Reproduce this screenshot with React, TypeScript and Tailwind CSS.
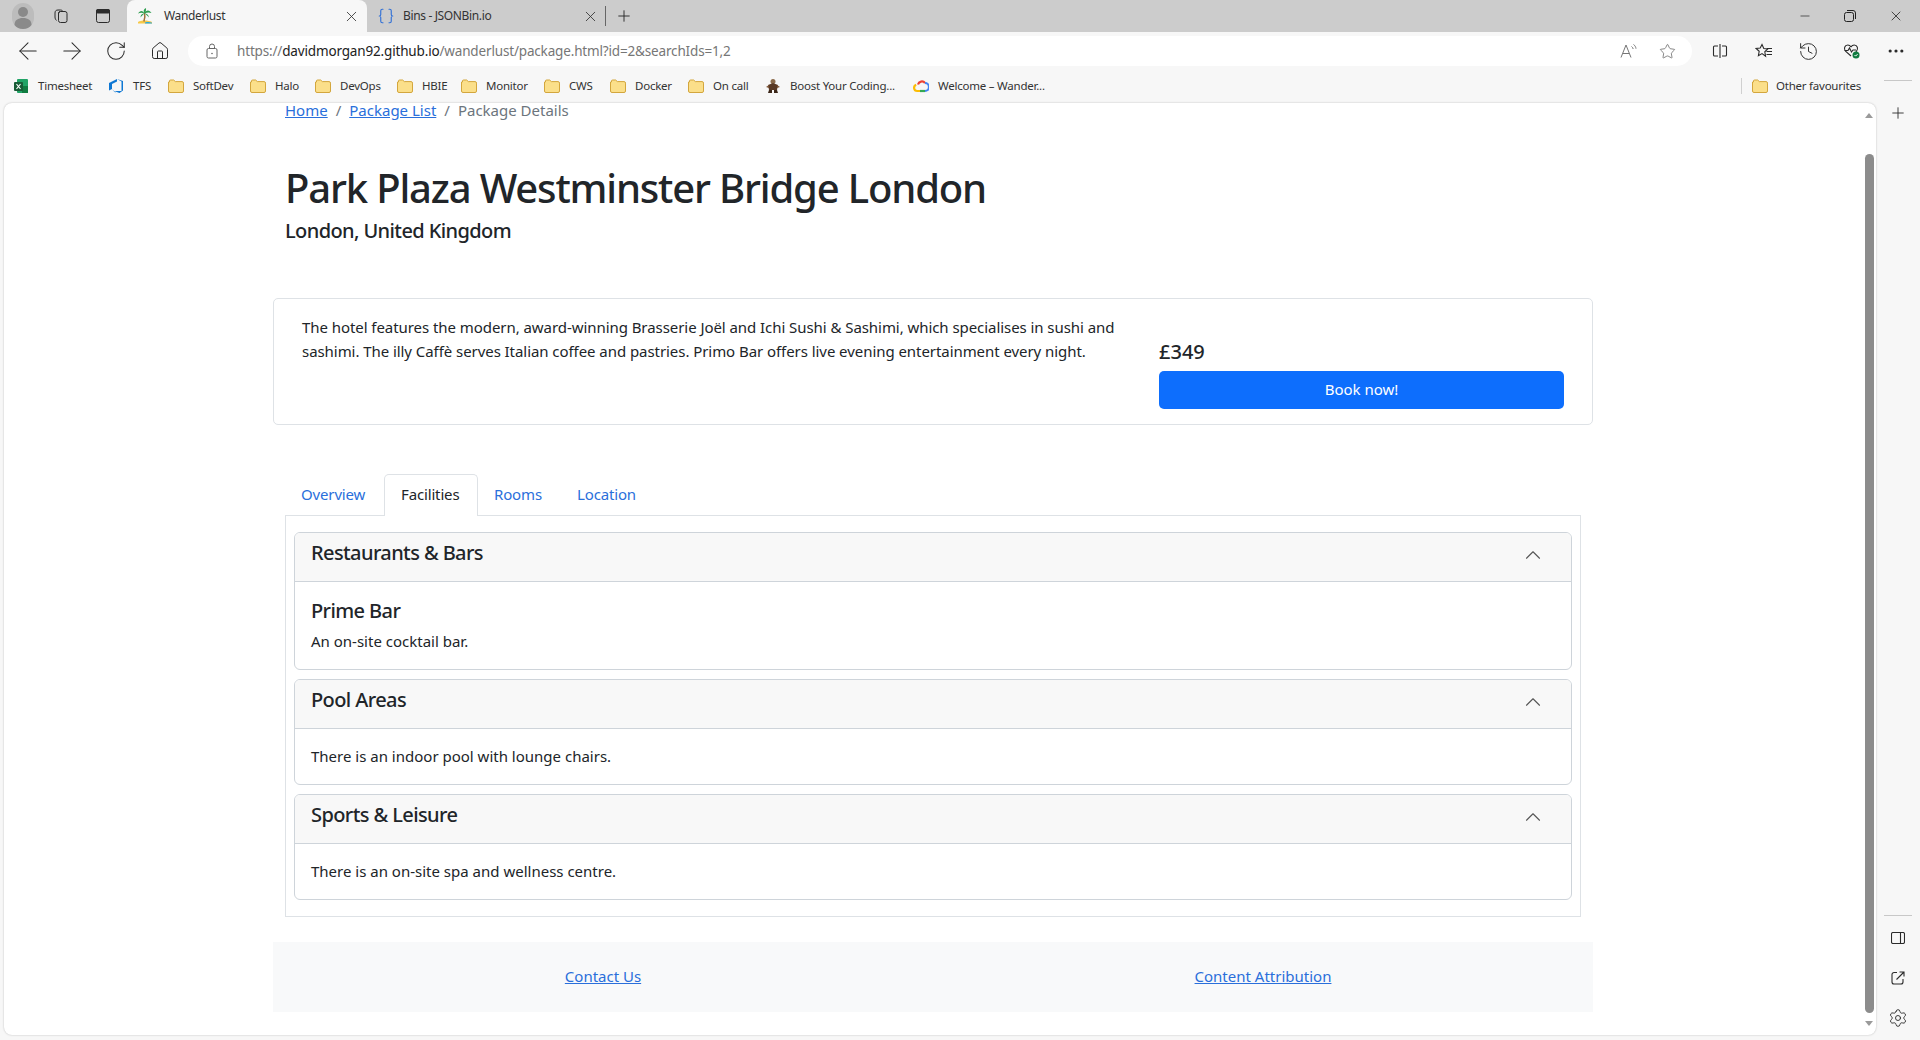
import { ArrowLeft, ArrowRight, Braces, ChevronUp, History, House, Minus, MoreHorizontal, Plus, RotateCw, Settings, Star, X } from 'lucide-react';

function Folder() {
  return (
    <svg width="16" height="14" viewBox="0 0 16 14" className="shrink-0">
      <path d="M1.5 3V2a1 1 0 0 1 1-1h3.2l1.6 1.6H14a1.5 1.5 0 0 1 1.5 1.5v7.9a1.5 1.5 0 0 1-1.5 1.5H2a1.5 1.5 0 0 1-1.5-1.5V3z" fill="#fbdf8a" stroke="#d3a63d" />
    </svg>
  );
}

function ExcelIcon() {
  return (
    <svg width="16" height="16" viewBox="0 0 16 16" className="shrink-0">
      <rect x="4" y="1" width="11" height="14" rx="1" fill="#21a366" />
      <rect x="9" y="8" width="6" height="7" fill="#107c41" />
      <rect x="1" y="4" width="9" height="9" rx="1" fill="#185c37" />
      <path d="M3.5 6l4 5M7.5 6l-4 5" stroke="#fff" strokeWidth="1.2" />
    </svg>
  );
}

function TfsIcon() {
  return (
    <svg width="16" height="16" viewBox="0 0 16 16" className="shrink-0">
      <path d="M15 3v9.5L11.5 15 6 13h7.5V3.4L9 1z" fill="#0f78d4" />
      <path d="M1 5l8-4v2.5L4 6v5l-3 1.5z" fill="#0f78d4" />
      <path d="M4 11l4.5 4.5L6 13.5z" fill="#0f78d4" />
    </svg>
  );
}

function DwarfIcon() {
  return (
    <svg width="16" height="16" viewBox="0 0 16 16" className="shrink-0">
      <circle cx="8" cy="3.5" r="2.5" fill="#8a6a4a" />
      <path d="M3 7l5-2 5 2-1 5H4z" fill="#5a3a25" />
      <path d="M4 12h3v3H3zM9 12h3l1 3H9z" fill="#3b2618" />
      <path d="M1 9l3-2v3zM15 9l-3-2v3z" fill="#7b5335" />
    </svg>
  );
}

function CloudIcon() {
  return (
    <svg width="16" height="14" viewBox="0 0 16 14" className="shrink-0">
      <path d="M5 5.5A4 4 0 0 1 12 4" fill="none" stroke="#ea4335" strokeWidth="2.2" />
      <path d="M12 4a3.9 3.9 0 0 1 0 8" fill="none" stroke="#4285f4" strokeWidth="2.2" />
      <path d="M12 12H7" fill="none" stroke="#34a853" strokeWidth="2.2" />
      <path d="M7 12H4.2a3.2 3.2 0 0 1-1-6.2" fill="none" stroke="#fbbc05" strokeWidth="2.2" />
    </svg>
  );
}

function PalmIcon() {
  return (
    <svg width="16" height="16" viewBox="0 0 16 16" className="shrink-0">
      <path d="M1 14c3-2 10-2 14 0v1.500H1z" fill="#f7c948" />
      <path d="M8 14.500c3-.8 5-.6 7 .2v.8H8z" fill="#29a9e0" />
      <path d="M7.500 5c.7 3 .5 5.500-.6 8.500" fill="none" stroke="#a0703a" strokeWidth="1.500" />
      <path d="M7.500 5.500C6 2 3 2 1 5.500 3.500 4.500 5.500 4.700 7.500 5.500zM7.500 5.500C9 1.500 12.500 1.500 14.500 5c-2.500-1-4.500-.7-7 .5zM7.500 5.500C6 3 6.500 1 9 0c.3 2.300-.3 4-1.500 5.500zM7.500 5.500C5 5.500 3.500 7 3.500 9.500c1.500-2 2.500-3 4-4zM7.500 5.500c2.500 0 4 1.500 4.500 4-1.500-2-3-3-4.500-4z" fill="#2e9e4f" />
    </svg>
  );
}

function CollectionsIcon() {
  return (
    <svg width="16" height="16" viewBox="0 0 16 16" fill="none" stroke="#2b2b2b" strokeWidth="1">
      <rect x="5.500" y="3.500" width="8.500" height="11" rx="2" />
      <path d="M3.500 12.500c-1-1-1.500-2-1.500-3.500V5c0-2 1-3 3-3h2.500c1 0 2 .5 2.500 1.500" />
      <path d="M5.500 6c0-1.500.8-2.500 2-2.500" />
    </svg>
  );
}

function TabActionsIcon() {
  return (
    <svg width="16" height="16" viewBox="0 0 16 16" fill="none" stroke="#2b2b2b" strokeWidth="1">
      <rect x="1.500" y="1.500" width="13" height="13" rx="2" />
      <rect x="1.500" y="1.500" width="13" height="3.500" rx="1" fill="#2b2b2b" />
    </svg>
  );
}

function ProfileIcon() {
  return (
    <svg width="22" height="26" viewBox="0 0 22 26">
      <rect width="22" height="26" rx="11" fill="#bcbcbc" />
      <circle cx="11" cy="9" r="5" fill="#8a8a8a" />
      <path d="M2.500 22c0-5 3.500-7 8.500-7s8.500 2 8.500 7c-2 2.500-5 4-8.500 4s-6.500-1.500-8.500-4z" fill="#8a8a8a" />
    </svg>
  );
}

function LockIcon() {
  return (
    <svg width="14" height="16" viewBox="0 0 14 16" fill="none" stroke="#666" strokeWidth="1">
      <rect x="2" y="5.500" width="10" height="9.500" rx="1.500" />
      <path d="M4.500 5.500V3.500a2.500 2.500 0 0 1 5 0v2" />
      <circle cx="7" cy="10.500" r="0.800" fill="#666" stroke="none" />
    </svg>
  );
}

function ReadAloudIcon() {
  return (
    <svg width="18" height="16" viewBox="0 0 18 16" fill="none" stroke="#767676" strokeWidth="1">
      <path d="M1 14.500L6 2l5 12.500M3 10.500h6" />
      <path d="M11.500 3.500c1 .7 1.500 1.500 1.700 2.500M13.500 1.500c1.500 1 2.300 2.500 2.500 4.200" />
    </svg>
  );
}

function SplitIcon() {
  return (
    <svg width="16" height="16" viewBox="0 0 16 16" fill="none" stroke="#2b2b2b" strokeWidth="1.100">
      <path d="M6 3H2.500A1 1 0 0 0 1.500 4v8a1 1 0 0 0 1 1H6M10 3h3.500a1 1 0 0 1 1 1v8a1 1 0 0 1-1 1H10M8 1v14" />
    </svg>
  );
}

function FavoritesIcon() {
  return (
    <svg width="18" height="16" viewBox="0 0 18 16" fill="none" stroke="#2b2b2b" strokeWidth="1.100">
      <path d="M7 1.500l1.800 4 4 .5-3 2.800.8 4.400L7 10.600 3.400 12.700l.8-4.400-3-2.800 4-.5z" />
      <path d="M12 5.500h5M11.500 8.500h5.500M11.500 11.500h5.500" />
    </svg>
  );
}

function HealthIcon() {
  return (
    <svg width="18" height="18" viewBox="0 0 18 18" fill="none">
      <path d="M8 14L2.500 9.200C.5 7 1.500 3 4.800 3c1.500 0 2.500.8 3.200 1.800C8.700 3.800 9.700 3 11.200 3c3.300 0 4.300 4 2.300 6.200L13 10" stroke="#2b2b2b" strokeWidth="1.100" />
      <path d="M1.500 8.500h3.500l1.500-2.500 2 4 1.500-2h3" stroke="#2b2b2b" strokeWidth="1.100" />
      <circle cx="13" cy="13" r="3.500" fill="#107c41" />
      <path d="M11.500 13l1.100 1.100 2-2" stroke="#fff" strokeWidth="1" />
    </svg>
  );
}

function PanelIcon() {
  return (
    <svg width="14" height="12" viewBox="0 0 14 12" fill="none" stroke="#2b2b2b" strokeWidth="1.100">
      <rect x="0.500" y="0.500" width="13" height="11" rx="1.500" />
      <path d="M9.500 0.500v11" />
    </svg>
  );
}

function ShareIcon() {
  return (
    <svg width="14" height="14" viewBox="0 0 14 14" fill="none" stroke="#2b2b2b" strokeWidth="1.100">
      <path d="M6 1.500H3A2 2 0 0 0 1 3.500v7.500a2 2 0 0 0 2 2h7a2 2 0 0 0 2-2V8" />
      <path d="M5.500 8.500L13 1M8.500 1H13v4.500" />
    </svg>
  );
}

const bookmarks = [
  { icon: <ExcelIcon />, label: 'Timesheet', width: 'w-[95px]' },
  { icon: <TfsIcon />, label: 'TFS', width: 'w-[60px]' },
  { icon: <Folder />, label: 'SoftDev', width: 'w-[82px]' },
  { icon: <Folder />, label: 'Halo', width: 'w-[65px]' },
  { icon: <Folder />, label: 'DevOps', width: 'w-[82px]' },
  { icon: <Folder />, label: 'HBIE', width: 'w-[64px]' },
  { icon: <Folder />, label: 'Monitor', width: 'w-[83px]' },
  { icon: <Folder />, label: 'CWS', width: 'w-[66px]' },
  { icon: <Folder />, label: 'Docker', width: 'w-[78px]' },
  { icon: <Folder />, label: 'On call', width: 'w-[77px]' },
  { icon: <DwarfIcon />, label: 'Boost Your Coding...', width: 'w-[148px]' },
  { icon: <CloudIcon />, label: 'Welcome – Wander...', width: 'w-[140px]' },
];

const facilities = [
  { title: 'Pool Areas', text: 'There is an indoor pool with lounge chairs.' },
  { title: 'Sports & Leisure', text: 'There is an on-site spa and wellness centre.' },
];

function AccordionHeader({ title }: { title: string }) {
  return (
    <div className="h-[49px] bg-[#f8f8f8] border-b border-[#ced4da] rounded-t-[5px] pl-4 pr-[25px] pt-2 flex justify-between">
      <span className="text-[20px] leading-6 font-medium tracking-[-0.03em]">{title}</span>
      <ChevronUp className="w-[26px] h-[26px] mt-[1px] text-[#555]" strokeWidth={1} />
    </div>
  );
}

export default function App() {
  return (
    <div className="w-[1920px] h-[1040px] overflow-hidden flex flex-col bg-[#f7f7f7] text-[#212529] font-['Noto_Sans',sans-serif]">
      {/* tab strip */}
      <div className="h-8 shrink-0 bg-[#cccccc] flex items-end text-[12px]">
        <div className="w-[127px] h-8 flex items-center shrink-0">
          <div className="ml-3"><ProfileIcon /></div>
          <div className="ml-[19px]"><CollectionsIcon /></div>
          <div className="ml-[26px]"><TabActionsIcon /></div>
        </div>
        <div className="w-[240px] h-8 bg-[#f7f7f7] rounded-t-lg flex items-center pl-[10px] pr-[7px]">
          <PalmIcon />
          <span className="ml-[11px] flex-1 tracking-[-0.03em] text-[#333]">Wanderlust</span>
          <X className="w-[17px] h-[17px] text-[#333]" strokeWidth={1.2} />
        </div>
        <div className="w-[238px] h-8 flex items-center pl-[10px] pr-[6px]">
          <Braces className="w-[18px] h-[18px] mr-2 shrink-0 text-[#2f6fd6]" strokeWidth={1.5} />
          <span className="flex-1 tracking-[-0.03em] text-[#333]">Bins - JSONBin.io</span>
          <X className="w-[17px] h-[17px] text-[#333]" strokeWidth={1.2} />
        </div>
        <div className="w-px h-5 mb-[6px] bg-[#666]" />
        <Plus className="w-[18px] h-[18px] mb-[7px] ml-[9px] text-[#222]" strokeWidth={1.2} />
        <div className="flex-1" />
        <div className="flex items-center h-8 pr-4 gap-[32px]">
          <Minus className="w-[14px] h-[14px] text-[#222]" strokeWidth={1.2} />
          <svg width="12" height="12" viewBox="0 0 12 12" fill="none" stroke="#222"><rect x="0.500" y="2.500" width="9" height="9" rx="2" /><path d="M3 .5h6a2.500 2.500 0 0 1 2.500 2.500v6" /></svg>
          <X className="w-4 h-4 text-[#222]" strokeWidth={1.2} />
        </div>
      </div>

      {/* toolbar */}
      <div className="h-9 shrink-0 flex items-center pt-[2px]">
        <div className="w-[188px] flex items-center pl-[6px] text-[#2b2b2b]">
          <div className="w-11 flex justify-center"><ArrowLeft className="w-[28px] h-[28px]" strokeWidth={0.9} /></div>
          <div className="w-11 flex justify-center"><ArrowRight className="w-[28px] h-[28px]" strokeWidth={0.9} /></div>
          <div className="w-11 flex justify-center"><RotateCw className="w-[22px] h-[22px]" strokeWidth={1.1} /></div>
          <div className="w-11 flex justify-center"><House className="w-5 h-5" strokeWidth={1.2} /></div>
        </div>
        <div className="w-[1504px] h-[30px] bg-white rounded-full flex items-center pl-[17px] pr-[16px]">
          <LockIcon />
          <span className="ml-[18px] text-[13.500px] tracking-[-0.012em] text-[#767676] flex-1">
            https://<span className="text-[#222]">davidmorgan92.github.io</span>/wanderlust/package.html?id=2&amp;searchIds=1,2
          </span>
          <ReadAloudIcon />
          <Star className="w-[17px] h-[17px] ml-[21px] text-[#666]" strokeWidth={1.1} />
        </div>
        <div className="flex items-center pl-[6px] text-[#2b2b2b]">
          <div className="w-11 flex justify-center"><SplitIcon /></div>
          <div className="w-11 flex justify-center"><FavoritesIcon /></div>
          <div className="w-11 flex justify-center"><History className="w-[21px] h-[21px]" strokeWidth={1.1} /></div>
          <div className="w-11 flex justify-center"><HealthIcon /></div>
          <div className="w-11 flex justify-center"><MoreHorizontal className="w-5 h-5" strokeWidth={1.800} /></div>
        </div>
      </div>

      {/* bookmarks */}
      <div className="h-[35px] shrink-0 flex items-center text-[11.500px] text-[#333] tracking-[-0.02em] pl-[13px]">
        {bookmarks.map((b) => (
          <div key={b.label} className={`${b.width} flex items-center gap-[9px] whitespace-nowrap`}>
            {b.icon}
            <span>{b.label}</span>
          </div>
        ))}
        <div className="flex-1" />
        <div className="w-px h-[16px] bg-[#d0d0d0]" />
        <div className="ml-[10px] flex items-center gap-2 w-[168px]">
          <Folder />
          <span>Other favourites</span>
        </div>
      </div>

      <div className="flex-1 flex min-h-0">
        {/* page */}
        <div className="ml-1 w-[1872px] mb-[5px] bg-white rounded-lg shadow-[0_0_2px_rgba(0,0,0,0.25)] flex">
          <div className="flex-1 min-w-0 text-[15px] leading-6">
            <div className="w-[1320px] mx-auto">
              <div className="pl-3 h-4 leading-[14px] text-[#6c757d] flex">
                <a className="text-[#2a6fdb] underline">Home</a>
                <span className="px-2">/</span>
                <a className="text-[#2a6fdb] underline">Package List</a>
                <span className="px-2">/</span>
                <span>Package Details</span>
              </div>

              <h1 className="mt-[45px] pl-3 text-[40px] leading-[48px] font-medium tracking-[-0.029em]">Park Plaza Westminster Bridge London</h1>
              <h2 className="mt-[7px] pl-3 text-[20px] leading-6 font-medium tracking-[-0.03em]">London, United Kingdom</h2>

              <div className="mt-[55px] h-[127px] border border-[#dee2e6] rounded-[5px] p-4 flex">
                <div className="w-[857px] px-3">
                  <p className="tracking-[-0.004em]">The hotel features the modern, award-winning Brasserie Joël and Ichi Sushi &amp; Sashimi, which specialises in sushi and sashimi. The illy Caffè serves Italian coffee and pastries. Primo Bar offers live evening entertainment every night.</p>
                </div>
                <div className="flex-1 px-3 pt-[25px]">
                  <div className="text-[20px] leading-6 font-medium">£349</div>
                  <button className="mt-[7px] w-full h-[38px] pb-[2px] bg-[#0d6efd] text-white rounded-[5px]">Book now!</button>
                </div>
              </div>

              <div className="mx-3 mt-[49px]">
                <div className="h-[41px] flex tracking-[-0.01em] text-[#2a6fdb]">
                  <a className="w-[99px] pl-4 pt-2">Overview</a>
                  <a className="w-[94px] h-[42px] pl-4 pt-[7px] bg-white border border-b-0 border-[#dee2e6] rounded-t-[5px] text-[#212529] relative z-10">Facilities</a>
                  <a className="w-[83px] pl-4 pt-2">Rooms</a>
                  <a className="pl-4 pt-2">Location</a>
                </div>
                <div className="border border-[#dee2e6] px-2 pt-4 pb-4 flex flex-col gap-[9px]">
                  <div className="h-[138px] border border-[#ced4da] rounded-md">
                    <AccordionHeader title="Restaurants & Bars" />
                    <div className="px-4 pt-[17px]">
                      <h3 className="text-[20px] leading-6 font-medium tracking-[-0.03em]">Prime Bar</h3>
                      <p className="mt-[6px]">An on-site cocktail bar.</p>
                    </div>
                  </div>
                  {facilities.map((f) => (
                    <div key={f.title} className="h-[106px] border border-[#ced4da] rounded-md">
                      <AccordionHeader title={f.title} />
                      <p className="px-4 pt-[15px]">{f.text}</p>
                    </div>
                  ))}
                </div>
              </div>

              <div className="mt-[25px] h-[70px] pb-[2px] bg-[#f8f9fa] grid grid-cols-2 items-center text-center">
                <a className="text-[#2a6fdb] underline">Contact Us</a>
                <a className="text-[#2a6fdb] underline">Content Attribution</a>
              </div>
            </div>
          </div>

          {/* scrollbar */}
          <div className="w-[14px] shrink-0 flex flex-col items-center">
            <div className="mt-[10px] w-0 h-0 border-x-[4px] border-x-transparent border-b-[5px] border-b-[#9a9a9a]" />
            <div className="mt-[36px] w-[9px] flex-1 rounded-full bg-[#8c8c8c]" />
            <div className="mt-[8px] mb-[9px] w-0 h-0 border-x-[4px] border-x-transparent border-t-[5px] border-t-[#9a9a9a]" />
          </div>
        </div>

        {/* edge sidebar */}
        <div className="flex-1 flex flex-col items-center relative">
          <Plus className="w-[18px] h-[18px] mt-[1px] text-[#2b2b2b]" strokeWidth={1.2} />
          <div className="flex-1" />
          <div className="w-7 h-px bg-[#c8c8c8]" />
          <div className="mt-4"><PanelIcon /></div>
          <div className="mt-[27px]"><ShareIcon /></div>
          <Settings className="w-5 h-5 mt-[23px] mb-3 text-[#2b2b2b]" strokeWidth={1.1} />
          <div className="absolute top-[-23px] w-7 h-px bg-[#c8c8c8]" />
        </div>
      </div>
    </div>
  );
}
